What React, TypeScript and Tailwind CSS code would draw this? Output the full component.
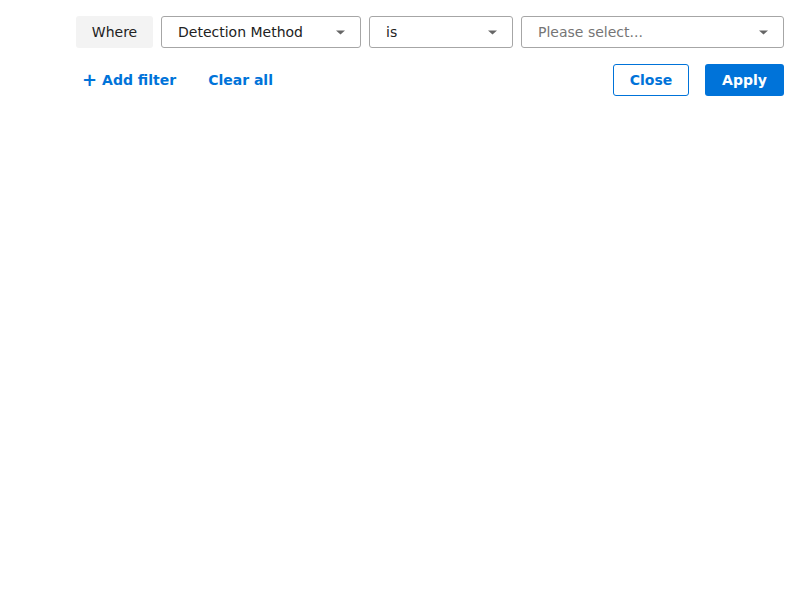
import React from "react";

const Caret = () => (
  <svg width="9" height="5" viewBox="0 0 9 5" className="shrink-0">
    <path d="M0 0.5 L9 0.5 L4.5 4.5 Z" fill="#666666" />
  </svg>
);

const Select = ({ label, placeholder, className }: { label: string; placeholder?: boolean; className: string }) => (
  <div
    className={`h-8 flex items-center justify-between border border-[#a6a6a6] rounded-[3px] bg-white pl-4 pr-[15px] ${className}`}
  >
    <span className={placeholder ? "text-[#757575]" : "text-[#222]"}>{label}</span>
    <Caret />
  </div>
);

export default function App() {
  return (
    <div
      className="w-[800px] h-[600px] bg-white pt-4 pl-[76px] pr-4 text-sm"
      style={{ fontFamily: '"DejaVu Sans", sans-serif' }}
    >
      <div className="flex gap-2 items-center">
        <div className="h-8 w-[77px] flex items-center justify-center bg-[#f3f3f3] rounded-[3px] text-[#222]">
          Where
        </div>
        <Select label="Detection Method" className="w-[200px]" />
        <Select label="is" className="w-[144px]" />
        <Select label="Please select..." placeholder className="flex-1" />
      </div>
      <div className="flex items-center mt-4">
        <button className="h-8 pl-[6px] pr-2 flex items-center gap-[5px] font-bold text-[#0073d9]">
          <span className="text-[18px] leading-none">+</span>
          <span>Add filter</span>
        </button>
        <button className="h-8 px-2 ml-4 font-bold text-[#0073d9]">Clear all</button>
        <div className="flex-1" />
        <button className="h-8 w-[76px] border border-[#0073d9] rounded-[3px] font-bold text-[#0073d9] bg-white">
          Close
        </button>
        <button className="h-8 w-[79px] ml-4 rounded-[3px] font-bold text-white bg-[#0073d9]">
          Apply
        </button>
      </div>
    </div>
  );
}
